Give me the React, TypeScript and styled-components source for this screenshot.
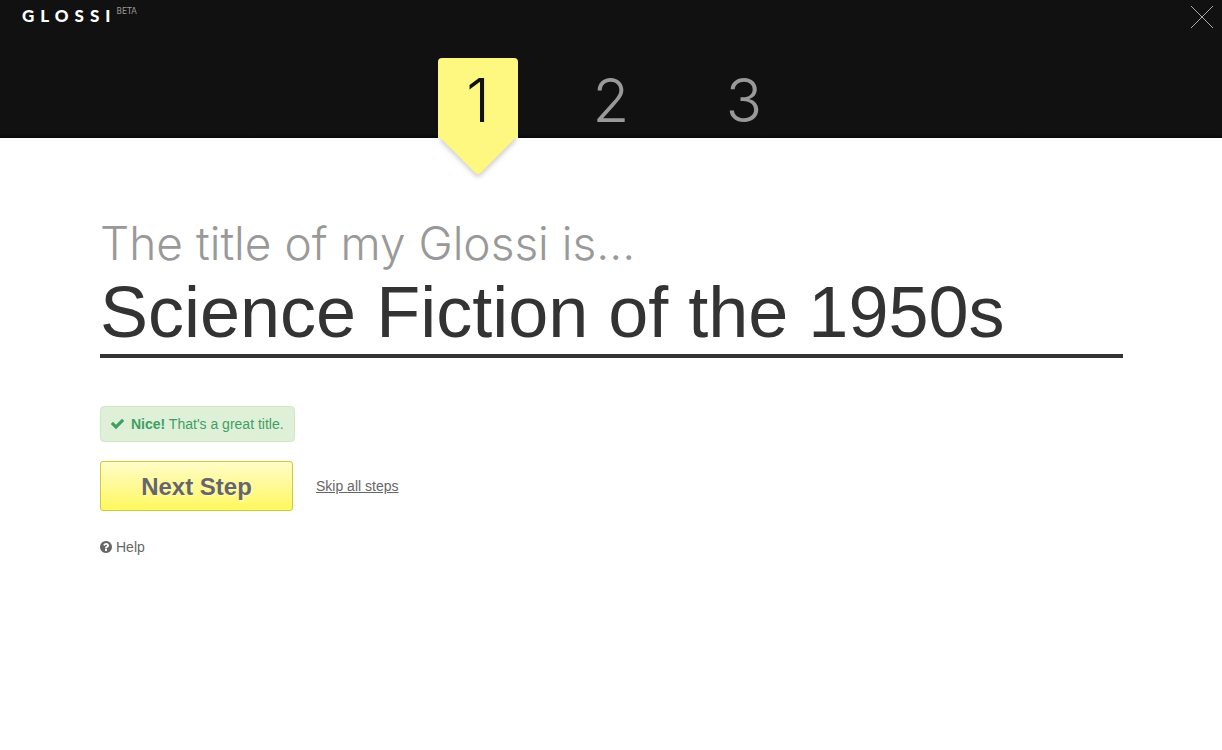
import React, { useState } from "react";
import styled, { createGlobalStyle } from "styled-components";

const GlobalStyle = createGlobalStyle`
  *, *::before, *::after { box-sizing: border-box; }
  body {
    margin: 0;
    background: #fff;
    color: #666;
    font-family: "Liberation Sans", Arial, sans-serif;
    font-size: 14px;
    line-height: 20px;
  }
`;

const Header = styled.header`
  background: linear-gradient(#111 0, #111 calc(100% - 4px), #080808 100%);
`;

const TopBar = styled.div`
  display: flex;
  justify-content: space-between;
  align-items: flex-start;
  height: 58px;
  padding: 6px 8px 0 22px;
`;

const Logo = styled.a`
  display: flex;
  align-items: flex-start;
  color: #fff;
  text-decoration: none;
  font-family: Lato, sans-serif;
  font-size: 17px;
  font-weight: 900;
  line-height: 20px;
  letter-spacing: 6px;
`;

const Beta = styled.sup`
  color: #999;
  font-family: "DejaVu Sans", sans-serif;
  font-size: 8px;
  font-weight: 400;
  line-height: 12px;
  letter-spacing: 0;
`;

const CloseButton = styled.button`
  display: flex;
  padding: 0;
  border: 0;
  background: none;
  color: #aaa;
  cursor: pointer;
`;

const Steps = styled.ol`
  display: flex;
  justify-content: center;
  gap: 53px;
  margin: 0;
  padding: 0;
  list-style: none;
`;

const Step = styled.li<{ $active?: boolean }>`
  position: relative;
  width: 80px;
  height: 80px;
  border-radius: 4px 4px 0 0;
  background: ${(p) => (p.$active ? "#fff880" : "transparent")};
  color: ${(p) => (p.$active ? "#111" : "#999")};
  font-family: Inter, "Liberation Sans", sans-serif;
  font-size: 60px;
  font-weight: 300;
  line-height: 84px;
  text-align: center;
`;

const StepTail = styled.span`
  position: absolute;
  top: 100%;
  left: 0;
  width: 80px;
  height: 48px;
  overflow: hidden;

  &::before {
    content: "";
    position: absolute;
    top: -30px;
    left: 12px;
    width: 56px;
    height: 56px;
    border-radius: 4px;
    background: #fff880;
    box-shadow: 2px 2px 5px rgba(0, 0, 0, 0.2);
    transform: rotate(45deg);
  }
`;

const Main = styled.main`
  padding: 76px 99px 40px 100px;
`;

const TitleLabel = styled.label`
  display: block;
  color: #999;
  font-family: Inter, "Liberation Sans", sans-serif;
  font-size: 46px;
  font-weight: 300;
  line-height: 58px;
`;

const TitleInput = styled.input`
  display: block;
  width: 100%;
  height: 86px;
  padding: 0 0 2px;
  border: 0;
  border-bottom: 4px solid #333;
  outline: 0;
  background: none;
  color: #333;
  font-family: inherit;
  font-size: 72px;
`;

const Alert = styled.p`
  display: flex;
  align-items: center;
  gap: 7px;
  width: fit-content;
  height: 36px;
  margin: 48px 0 19px;
  padding: 0 10px;
  border: 1px solid #d0e9c0;
  border-radius: 4px;
  background: #dff0d8;
  color: #3f9f63;
`;

const Actions = styled.div`
  display: flex;
  align-items: center;
  gap: 23px;
`;

const NextButton = styled.button`
  width: 193px;
  height: 50px;
  padding: 2px 0 0;
  border: 1px solid #cc3;
  border-radius: 3px;
  background: linear-gradient(#fffcc8, #fff860);
  color: #666;
  font-family: inherit;
  font-size: 24px;
  font-weight: 700;
  text-shadow: 1px 1px 2px #fffcc8;
  cursor: pointer;
`;

const TextLink = styled.a`
  color: #666;
`;

const HelpLink = styled.a`
  display: flex;
  align-items: center;
  gap: 4px;
  width: fit-content;
  margin-top: 26px;
  color: #666;
  text-decoration: none;
`;

const CheckIcon = () => (
  <svg width="13" height="10" viewBox="121 334 1550 1184" fill="currentColor" aria-hidden="true">
    <path d="M1671 566q0 40-28 68l-724 724-136 136q-28 28-68 28t-68-28l-136-136-362-362q-28-28-28-68t28-68l136-136q28-28 68-28t68 28l294 295 656-657q28-28 68-28t68 28l136 136q28 28 28 68z" />
  </svg>
);

const QuestionIcon = () => (
  <svg width="12" height="12" viewBox="128 128 1536 1536" fill="currentColor" aria-hidden="true">
    <path d="M1024 1376v-192q0-14-9-23t-23-9h-192q-14 0-23 9t-9 23v192q0 14 9 23t23 9h192q14 0 23-9t9-23zm256-672q0-88-55.5-163t-138.5-116-170-41q-243 0-371 213-15 24 8 42l132 100q7 6 19 6 16 0 25-12 53-68 86-92 34-24 86-24 48 0 85.5 26t37.5 59q0 38-20 61t-68 45q-63 28-115.5 86.5t-52.5 125.5v36q0 14 9 23t23 9h192q14 0 23-9t9-23q0-19 21.5-49.5t54.5-49.5q32-18 49-28.5t46-35 44.5-48 28-60.5 12.5-81zm384 192q0 209-103 385.5t-279.5 279.5-385.5 103-385.5-103-279.5-279.5-103-385.5 103-385.5 279.5-279.5 385.5-103 385.5 103 279.5 279.5 103 385.5z" />
  </svg>
);

export default function App() {
  const [title, setTitle] = useState("Science Fiction of the 1950s");

  return (
    <>
      <GlobalStyle />
      <Header>
        <TopBar>
          <Logo href="#">
            GLOSSI<Beta>BETA</Beta>
          </Logo>
          <CloseButton type="button" aria-label="Close">
            <svg width="24" height="22" viewBox="0 0 24 22" fill="none" stroke="currentColor">
              <path d="M1 0L23 22M23 0L1 22" />
            </svg>
          </CloseButton>
        </TopBar>
        <Steps>
          <Step $active aria-current="step">
            1<StepTail />
          </Step>
          <Step>2</Step>
          <Step>3</Step>
        </Steps>
      </Header>
      <Main>
        <TitleLabel htmlFor="title">The title of my Glossi is...</TitleLabel>
        <TitleInput id="title" type="text" value={title} onChange={(e) => setTitle(e.target.value)} />
        <Alert role="status">
          <CheckIcon />
          <span>
            <strong>Nice!</strong> That's a great title.
          </span>
        </Alert>
        <Actions>
          <NextButton type="button">Next Step</NextButton>
          <TextLink href="#">Skip all steps</TextLink>
        </Actions>
        <HelpLink href="#">
          <QuestionIcon />
          Help
        </HelpLink>
      </Main>
    </>
  );
}
